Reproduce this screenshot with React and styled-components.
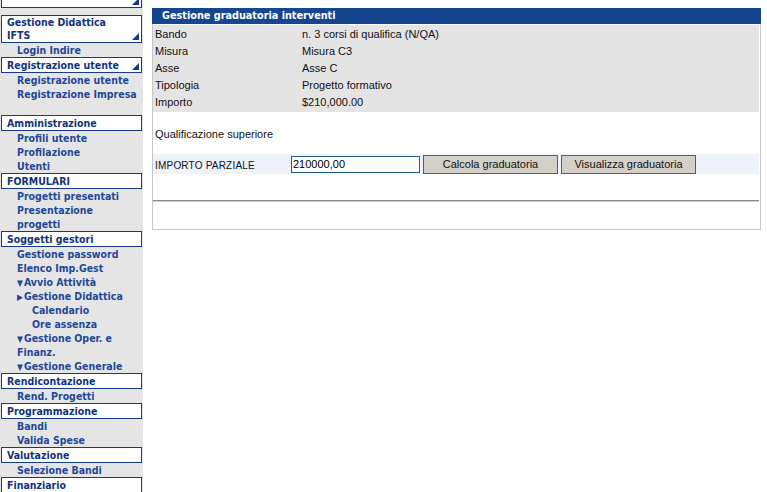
import React from "react";
import styled, { createGlobalStyle } from "styled-components";

const GlobalStyle = createGlobalStyle`
  html, body {
    margin: 0;
    padding: 0;
    background: #ffffff;
    overflow: hidden;
  }
  body {
    font-family: "Liberation Sans", Arial, sans-serif;
  }
`;

const Page = styled.div`
  display: flex;
  align-items: flex-start;
  gap: 9px;
  height: 492px;
  overflow: hidden;
`;

const Sidebar = styled.nav`
  width: 143px;
  box-sizing: border-box;
  padding: 0 1px;
  background: #e5e5e5;
  min-height: 492px;
  display: flex;
  flex-direction: column;
  font-family: "DejaVu Sans Condensed", "DejaVu Sans", sans-serif;
  font-stretch: condensed;
  font-weight: bold;
  font-size: 10.5px;
`;

const SectionHeader = styled.div`
  position: relative;
  box-sizing: border-box;
  background: #ffffff;
  border: 1px solid #163a86;
  border-top-width: ${(p) => (p.$clipped ? "0" : "1px")};
  height: ${(p) => (p.$clipped ? "8px" : "auto")};
  margin-top: ${(p) => p.$gap || 0}px;
  padding: 0 16px 0 5px;
  color: #12337a;
  line-height: ${(p) => (p.$lines > 1 ? "13px" : "14px")};
  white-space: ${(p) => (p.$lines > 1 ? "normal" : "nowrap")};
`;

const Corner = styled.span`
  position: absolute;
  right: 2px;
  bottom: 2px;
  width: 0;
  height: 0;
  border-style: solid;
  border-width: 0 0 7px 7px;
  border-color: transparent transparent #163a86 transparent;
`;

const Item = styled.div`
  line-height: 14px;
  height: ${(p) => (p.$wrap ? "28px" : "14px")};
  padding-left: ${(p) => (p.$level === 2 ? 31 : 16)}px;
  padding-right: 8px;
  color: #1f4898;
  white-space: ${(p) => (p.$wrap ? "normal" : "nowrap")};
  overflow: hidden;
`;

const Arrow = styled.span`
  font-family: "DejaVu Sans", sans-serif;
  font-size: 8.5px;
  line-height: 0;
  margin-right: 1px;
`;

const Main = styled.main`
  width: 609px;
  margin-top: 8px;
  box-sizing: border-box;
  border: 1px solid #c6c6c6;
  border-top: 0;
  display: flex;
  flex-direction: column;
  font-size: 11px;
  color: #111;
`;

const TitleBar = styled.div`
  margin: 0 -1px;
  height: 16px;
  line-height: 16px;
  background: #15468f;
  color: #ffffff;
  font-family: "DejaVu Sans", sans-serif;
  font-weight: bold;
  font-size: 9.7px;
  padding-left: 10px;
`;

const InfoTable = styled.div`
  margin: 1px 1px 0 0;
  background: #e4e4e4;
  padding: 1px 0 1px 2px;
  display: grid;
  grid-template-columns: 147px 1fr;
  grid-auto-rows: 17px;
  align-items: center;
`;

const Cell = styled.div`
  line-height: 17px;
`;

const Note = styled.div`
  margin-top: 14px;
  padding-left: 2px;
  line-height: 17px;
`;

const FormRow = styled.div`
  margin: 11px 1px 0 0;
  height: 20px;
  background: #edf2fb;
  display: flex;
  align-items: center;
  padding-left: 2px;
`;

const FieldLabel = styled.span`
  width: 136px;
  font-size: 10px;
  letter-spacing: 0.2px;
  padding-top: 2px;
`;

const Input = styled.input`
  box-sizing: border-box;
  width: 129px;
  height: 17px;
  border: 1px solid #245d8a;
  padding: 0 1px;
  font-family: "Liberation Sans", Arial, sans-serif;
  font-size: 11px;
  color: #000;
  outline: none;
  margin: 0;
`;

const Button = styled.button`
  box-sizing: border-box;
  width: ${(p) => p.$w}px;
  height: 19px;
  margin: 0 0 0 3px;
  background: #d4d0c8;
  border: 1px solid #3b6588;
  font-family: "Liberation Sans", Arial, sans-serif;
  font-size: 11px;
  color: #111;
  padding: 0;
  line-height: 17px;
`;

const Divider = styled.hr`
  margin: 26px 1px 0 0;
  border: 0;
  border-top: 1px solid #8c8c8c;
  border-bottom: 1px solid #cfcfcf;
  height: 0;
`;

const Spacer = styled.div`
  height: 27px;
`;

const info = [
  ["Bando", "n. 3 corsi di qualifica (N/QA)"],
  ["Misura", "Misura C3"],
  ["Asse", "Asse C"],
  ["Tipologia", "Progetto formativo"],
  ["Importo", "$210,000.00"],
];

export default function App() {
  return (
    <>
      <GlobalStyle />
      <Page>
        <Sidebar>
          <SectionHeader $clipped>
            <Corner />
          </SectionHeader>
          <SectionHeader $gap={7} $lines={2}>
            Gestione Didattica IFTS
            <Corner />
          </SectionHeader>
          <Item>Login Indire</Item>
          <SectionHeader>
            Registrazione utente
            <Corner />
          </SectionHeader>
          <Item>Registrazione utente</Item>
          <Item>Registrazione Impresa</Item>
          <SectionHeader $gap={14}>Amministrazione</SectionHeader>
          <Item>Profili utente</Item>
          <Item>Profilazione</Item>
          <Item>Utenti</Item>
          <SectionHeader>FORMULARI</SectionHeader>
          <Item>Progetti presentati</Item>
          <Item $wrap>Presentazione progetti</Item>
          <SectionHeader>Soggetti gestori</SectionHeader>
          <Item>Gestione password</Item>
          <Item>Elenco Imp.Gest</Item>
          <Item>
            <Arrow>▼</Arrow>Avvio Attività
          </Item>
          <Item>
            <Arrow>▶</Arrow>Gestione Didattica
          </Item>
          <Item $level={2}>Calendario</Item>
          <Item $level={2}>Ore assenza</Item>
          <Item $wrap>
            <Arrow>▼</Arrow>Gestione Oper. e Finanz.
          </Item>
          <Item>
            <Arrow>▼</Arrow>Gestione Generale
          </Item>
          <SectionHeader>Rendicontazione</SectionHeader>
          <Item>Rend. Progetti</Item>
          <SectionHeader>Programmazione</SectionHeader>
          <Item>Bandi</Item>
          <Item>Valida Spese</Item>
          <SectionHeader>Valutazione</SectionHeader>
          <Item>Selezione Bandi</Item>
          <SectionHeader>Finanziario</SectionHeader>
        </Sidebar>

        <Main>
          <TitleBar>Gestione graduatoria interventi</TitleBar>
          <InfoTable>
            {info.map(([k, v]) => (
              <React.Fragment key={k}>
                <Cell>{k}</Cell>
                <Cell>{v}</Cell>
              </React.Fragment>
            ))}
          </InfoTable>
          <Note>Qualificazione superiore</Note>
          <FormRow>
            <FieldLabel>IMPORTO PARZIALE</FieldLabel>
            <Input defaultValue="210000,00" />
            <Button $w={135}>Calcola graduatoria</Button>
            <Button $w={135}>Visualizza graduatoria</Button>
          </FormRow>
          <Divider />
          <Spacer />
        </Main>
      </Page>
    </>
  );
}
